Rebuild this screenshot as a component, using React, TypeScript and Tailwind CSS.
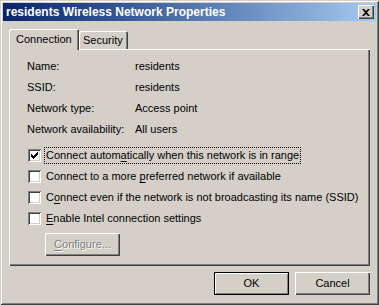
const raised =
  "shadow-[inset_1px_1px_#ffffff,inset_-1px_-1px_#404040,inset_-2px_-2px_#808080]";

const info = [
  { label: "Name:", value: "residents" },
  { label: "SSID:", value: "residents" },
  { label: "Network type:", value: "Access point" },
  { label: "Network availability:", value: "All users" },
];

const Check = ({ checked }: { checked?: boolean }) => (
  <span className="w-[13px] h-[13px] shrink-0 bg-white flex items-center justify-center shadow-[inset_1px_1px_#808080,inset_-1px_-1px_#ffffff,inset_2px_2px_#404040,inset_-2px_-2px_#d4d0c8]">
    {checked && (
      <svg width="7" height="7" viewBox="0 0 7 7">
        <path d="M0 2h1v1h1v1h1V3h1V2h1V1h1V0h1v3h-1v1h-1v1h-1v1h-1v1h-1V6H1V5H0z" fill="#000" />
      </svg>
    )}
  </span>
);

const options = [
  { pre: "Connect autom", key: "a", post: "tically when this network is in range", checked: true, focus: true },
  { pre: "Connect to a more ", key: "p", post: "referred network if available" },
  { pre: "C", key: "o", post: "nnect even if the network is not broadcasting its name (SSID)" },
  { pre: "", key: "E", post: "nable Intel connection settings" },
];

export default function App() {
  return (
    <div
      className={`w-[379px] h-[305px] bg-[#d4d0c8] p-[3px] text-[11px] leading-[13px] text-black shadow-[inset_1px_1px_#d4d0c8,inset_-1px_-1px_#404040,inset_2px_2px_#ffffff,inset_-2px_-2px_#808080]`}
      style={{ fontFamily: '"Liberation Sans", Arial, sans-serif' }}
    >
      {/* title bar */}
      <div className="h-[18px] flex items-center justify-between pl-[3px] pr-[2px] bg-gradient-to-r from-[#0a246a] to-[#a6caf0]">
        <span className="text-white font-bold text-[12px]">residents Wireless Network Properties</span>
        <button className={`w-[16px] h-[14px] bg-[#d4d0c8] flex items-center justify-center ${raised}`}>
          <svg width="8" height="7" viewBox="0 0 8 7">
            <path d="M0 0h2l2 2 2-2h2L5 3.5 8 7H6L4 5 2 7H0l3-3.5z" fill="#000" />
          </svg>
        </button>
      </div>

      <div className="px-[6px] pt-[8px]">
        {/* tabs */}
        <div className="flex items-end h-[20px]">
          <div className="relative z-10 w-[70px] h-[21px] -mb-px bg-[#d4d0c8] rounded-t-[2px] pl-[7px] pt-[4px] shadow-[inset_1px_1px_#ffffff,inset_-1px_0_#404040,inset_-2px_0_#808080]">
            Connection
          </div>
          <div className="w-[49px] h-[18px] bg-[#d4d0c8] rounded-t-[2px] pl-[4px] pt-[3px] shadow-[inset_1px_1px_#ffffff,inset_-1px_0_#404040,inset_-2px_0_#808080]">
            Security
          </div>
        </div>

        {/* panel */}
        <div className="w-[361px] h-[217px] pt-[7px] pl-[18px] shadow-[inset_1px_1px_#ffffff,inset_-1px_-1px_#404040,inset_-2px_-2px_#808080]">
          {info.map((r) => (
            <div key={r.label} className="h-[21px] flex items-center">
              <span className="w-[108px]">{r.label}</span>
              <span>{r.value}</span>
            </div>
          ))}

          <div className="mt-[5px] pl-[1px]">
            {options.map((o, i) => (
              <div key={i} className="h-[21px] flex items-center">
                <Check checked={o.checked} />
                <span
                  className={`ml-[4px] px-[1px] py-[1px] ${o.focus ? "outline outline-1 outline-dotted outline-black" : ""}`}
                >
                  {o.pre}
                  <span className="underline underline-offset-[2px]">{o.key}</span>
                  {o.post}
                </span>
              </div>
            ))}
          </div>

          <button
            className={`mt-[4px] ml-[18px] w-[75px] h-[23px] bg-[#d4d0c8] text-[#808080] [text-shadow:1px_1px_#ffffff] ${raised}`}
          >
            <span className="underline underline-offset-[2px]">C</span>onfigure...
          </button>
        </div>

        {/* dialog buttons */}
        <div className="flex justify-end gap-[6px] mt-[6px] w-[361px]">
          <button className="w-[75px] h-[23px] bg-[#d4d0c8] border border-black shadow-[inset_1px_1px_#ffffff,inset_-1px_-1px_#808080]">
            OK
          </button>
          <button className={`w-[75px] h-[23px] bg-[#d4d0c8] ${raised}`}>Cancel</button>
        </div>
      </div>
    </div>
  );
}
